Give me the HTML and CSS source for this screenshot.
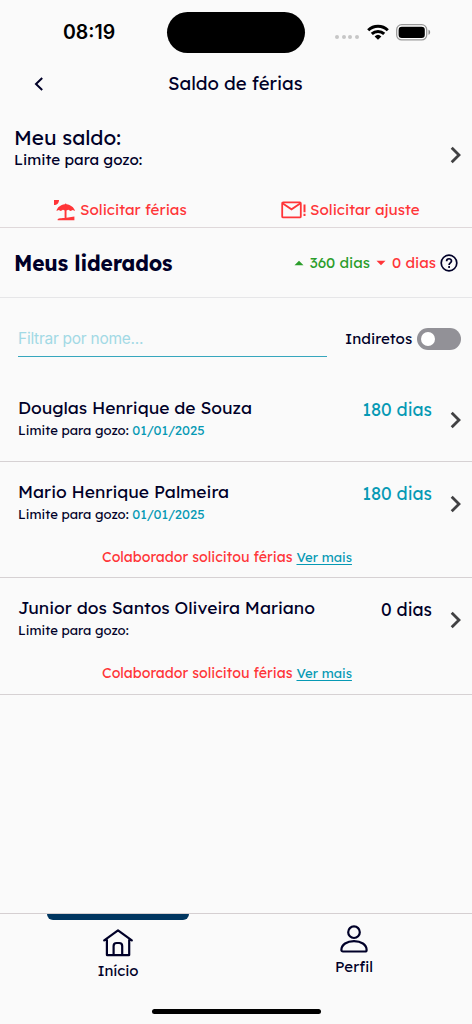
FILE: index.html
```html
<!DOCTYPE html>
<html lang="pt-BR">
<head>
<meta charset="utf-8">
<title>Saldo de férias</title>
<link rel="stylesheet" href="styles.css">
</head>
<body>
<div class="screen">
  <div class="status">
    <span class="time">08:19</span>
    <span class="island"></span>
    <div class="indicators">
      <span class="dots"><i></i><i></i><i></i><i></i></span>
      <svg class="wifi" width="22" height="16" viewBox="0 0 22 16" fill="none" stroke="#000" stroke-width="3"><path d="M1.2 6.2a14 14 0 0 1 19.6 0"/><path d="M4.8 9.9a9 9 0 0 1 12.4 0"/><path d="M11 15.8L7.6 12.4a5 5 0 0 1 6.8 0z" fill="#000" stroke="none"/></svg>
      <svg class="battery" width="35" height="17" viewBox="0 0 35 17"><rect x=".7" y=".7" width="30" height="15.2" rx="5" fill="#fff" stroke="#999" stroke-width="1.3"/><rect x="2.6" y="2.7" width="26.2" height="11.2" rx="3.2"/><path d="M32.5 5.8c2.2.6 2.2 4.4 0 5z" fill="#888"/></svg>
    </div>
  </div>
  <header class="header">
    <svg class="back" width="10" height="14" viewBox="0 0 10 14" fill="none" stroke="#000028" stroke-width="2"><path d="M8.2 1L2 7l6.2 6"/></svg>
    <h1 class="title">Saldo de férias</h1>
  </header>
  <section class="summary">
    <div class="summary-main">
      <div class="summary-text">
        <span class="balance">Meu saldo:</span>
        <span class="limit-lg">Limite para gozo:</span>
      </div>
      <svg class="chev" width="12" height="18" viewBox="0 0 12 18"><path d="M1.7 1.7L9 9l-7.3 7.3" fill="none" stroke="#414143" stroke-width="2.8"/></svg>
    </div>
    <div class="actions">
      <div class="action">
        <svg width="22" height="22" viewBox="0 0 22 22" fill="#ff3538"><path d="M0 1h5c0 3-2 5-5 5z"/><path d="M2.500 11.900c.8-3.600 4-6 8.300-6.600.1-1 1.600-1 1.700 0 4.200.6 7.500 3 8.500 6.600l-2.200-1-2.300 1-2.200-1.100-1.800.7v7.300l7.900-1.300v3.700H3.700c-.5-1.700 1.700-2.100 6.900-2.200v-7.400l-1.600-.8-2.200 1.100-2.100-1z"/></svg>
        <span>Solicitar férias</span>
      </div>
      <div class="action">
        <svg width="26" height="18" viewBox="0 0 26 18" fill="none" stroke="#ff3538" stroke-width="1.800"><rect x="1.200" y="1.400" width="18.600" height="15" rx="1"/><path d="M1.500 2.300l9 6 9-6"/><path d="M23.500 3.500v7.700M23.500 12.800v2.200" stroke-width="2"/></svg>
        <span>Solicitar ajuste</span>
      </div>
    </div>
  </section>
  <section class="team">
    <h2 class="team-title">Meus liderados</h2>
    <div class="totals">
      <svg width="10" height="6" viewBox="0 0 10 6"><path d="M.5 5.300L5 .8l4.500 4.500z" fill="#2b9d2b"/></svg>
      <span class="plus">360 dias</span>
      <svg width="10" height="6" viewBox="0 0 10 6"><path d="M.5 .7h9L5 5.200z" fill="#ff3538"/></svg>
      <span class="minus">0 dias</span>
      <svg width="18" height="18" viewBox="0 0 18 18" fill="none" stroke="#000028" stroke-width="1.700"><circle cx="9" cy="9" r="7.800"/><path d="M6.600 7.200c0-3.200 4.900-3.200 4.900-.2 0 1.900-2.400 1.900-2.400 3.900M9.100 12.100v1.800"/></svg>
    </div>
  </section>
  <section class="filter">
    <div class="field"><span class="placeholder">Filtrar por nome...</span></div>
    <span class="indirect">Indiretos</span>
    <span class="toggle"><i></i></span>
  </section>
  <ul class="people">
    <li class="person">
      <div class="person-main"><div class="person-text"><span class="name">Douglas Henrique de Souza</span><span class="limit">Limite para gozo: <b class="date">01/01/2025</b></span></div><span class="days">180 dias</span><svg class="chev" width="12" height="18" viewBox="0 0 12 18"><path d="M1.700 1.700L9 9l-7.300 7.300" fill="none" stroke="#414143" stroke-width="2.800"/></svg></div>
    </li>
    <li class="person">
      <div class="person-main"><div class="person-text"><span class="name">Mario Henrique Palmeira</span><span class="limit">Limite para gozo: <b class="date">01/01/2025</b></span></div><span class="days">180 dias</span><svg class="chev" width="12" height="18" viewBox="0 0 12 18"><path d="M1.700 1.700L9 9l-7.300 7.300" fill="none" stroke="#414143" stroke-width="2.800"/></svg></div>
      <p class="note"><span>Colaborador solicitou férias</span><a class="more">Ver mais</a></p>
    </li>
    <li class="person last">
      <div class="person-main"><div class="person-text"><span class="name">Junior dos Santos Oliveira Mariano</span><span class="limit">Limite para gozo:</span></div><span class="days none">0 dias</span><svg class="chev" width="12" height="18" viewBox="0 0 12 18"><path d="M1.700 1.700L9 9l-7.300 7.300" fill="none" stroke="#414143" stroke-width="2.800"/></svg></div>
      <p class="note"><span>Colaborador solicitou férias</span><a class="more">Ver mais</a></p>
    </li>
  </ul>
  <nav class="nav">
    <div class="tab home">
      <span class="marker"></span>
      <svg width="30" height="28" viewBox="0 0 30 28" fill="none" stroke="#000028" stroke-width="2.200" stroke-linecap="round" stroke-linejoin="round"><path d="M1.200 11.300L15 1.400l13.800 9.900M3.900 10.500v15.600h22.300V10.500M10.600 26V17c0-2 1-3 3-3h2.600c2 0 3 1 3 3v9"/></svg>
      <span>Início</span>
    </div>
    <div class="tab profile">
      <svg width="28" height="28" viewBox="0 0 28 28" fill="none" stroke="#000028" stroke-width="2.200"><circle cx="14" cy="7.200" r="5.800"/><path d="M3 26.500c-1 0-1.600-.6-1.600-1.600 0-5.400 5.600-8.700 12.600-8.700s12.600 3.300 12.600 8.700c0 1-.6 1.600-1.600 1.600z"/></svg>
      <span>Perfil</span>
    </div>
  </nav>
  <div class="home-indicator"></div>
</div>
</body>
</html>
```
FILE: styles.css
```css
* { box-sizing: border-box; }
body { margin: 0; background: #fafafa; }
.screen {
  width: 472px; height: 1024px; display: flex; flex-direction: column;
  font-family: Lexend, Inter, "Noto Sans", sans-serif;
  font-feature-settings: "cv11", "cv08"; font-weight: 400;
  color: #000028; background: #fafafa; white-space: nowrap; overflow: hidden;
}
svg { display: block; flex: none; }
h1, h2, p, ul { margin: 0; padding: 0; font-weight: inherit; list-style: none; }
.status { height: 60px; display: grid; grid-template-columns: 167px 138px 1fr; padding-top: 12px; }
.time { padding-left: 63px; font: 600 19.5px/41px Inter, sans-serif; color: #000; }
.island { height: 41px; border-radius: 21px; background: #000; }
.indicators { display: flex; height: 41px; padding-left: 30px; }
.dots { display: flex; gap: 2.5px; padding-top: 23px; width: 32px; }
.dots i { width: 4px; height: 4px; border-radius: 50%; background: #c6c6c6; }
.wifi { margin-top: 12px; }
.battery { margin: 12px 0 0 7px; }
.header { height: 50px; display: flex; padding-left: 34px; }
.back { margin-top: 17px; }
.title { margin-left: 124px; font-size: 18.5px; line-height: 47px; }
.summary { height: 118px; border-bottom: 1px solid #dfd8da; }
.summary-main { height: 82px; display: flex; justify-content: space-between; padding: 16px 10px 0 14px; }
.summary-text { display: flex; flex-direction: column; }
.balance { font-size: 20.7px; line-height: 23px; }
.limit-lg { font-size: 15.2px; line-height: 22px; }
.chev { margin-top: 20px; }
.actions { display: grid; grid-template-columns: 1fr 1fr; color: #ff3538; font-size: 15.2px; }
.action { display: flex; align-items: center; gap: 4px; height: 36px; padding-left: 54px; line-height: 20px; }
.action span { margin-top: -1px; }
.action + .action { padding-left: 45px; gap: 3px; }
.team { height: 70px; border-bottom: 1px solid #e6e6e8; display: flex; align-items: center; justify-content: space-between; padding: 0 14px; }
.team-title { font-size: 21px; font-weight: 700; letter-spacing: -.2px; }
.totals { display: flex; align-items: center; font-size: 15.1px; }
.plus { color: #2b9d2b; margin: 0 6px; }
.minus { color: #ff3538; margin: 0 4px 0 6px; }
.filter { height: 80px; display: flex; padding: 23px 11px 0 18px; align-items: flex-start; line-height: 36px; }
.field { width: 309px; height: 36px; border-bottom: 1px solid #36a6bd; margin-right: 18px; line-height: 34px; }
.placeholder { font-family: Inter, sans-serif; font-feature-settings: normal; font-size: 15.5px; letter-spacing: -.26px; color: #a2d9e5; }
.indirect { font-size: 15.2px; width: 72px; }
.toggle { width: 44px; height: 22px; margin-top: 7px; padding: 4px; border-radius: 11px; background: #929197; }
.toggle i { display: block; width: 14px; height: 14px; border-radius: 50%; background: #fff; }
.person { height: 84px; border-bottom: 1px solid #d6d1d3; }
.person + .person { height: 116px; }
.person.last { height: 117px; }
.person-main { display: flex; padding: 19px 10px 0 18px; height: 84px; }
.person-text { display: flex; flex-direction: column; flex: 1; }
.name { font-size: 17.45px; line-height: 22px; }
.limit { font-size: 13.1px; line-height: 22px; }
.date { font-weight: inherit; color: #0699b4; }
.days { font-size: 17.5px; line-height: 24px; color: #0699b4; margin-right: 18px; }
.days.none { color: #000028; }
.person .chev { margin-top: 14px; }
.note { display: flex; gap: 4px; padding-left: 102px; font-size: 14.2px; line-height: 22px; color: #ff3538; }
.more { color: #0699b4; font-size: 13.1px; text-decoration: underline; text-underline-offset: 2px; }
.nav { margin-top: auto; height: 90px; flex: none; border-top: 1px solid #d5cfd1; display: grid; grid-template-columns: 1fr 1fr; font-size: 15px; }
.tab { display: flex; flex-direction: column; align-items: center; }
.marker { width: 142px; height: 6px; background: #003660; border-radius: 0 0 6px 6px; margin-bottom: 9px; }
.home svg { margin-bottom: 4px; }
.profile { padding-top: 11px; }
.profile svg { margin-bottom: 4px; }
.home-indicator { width: 169px; height: 5px; border-radius: 3px; background: #000; margin: 6px auto 10px; flex: none; }
```
